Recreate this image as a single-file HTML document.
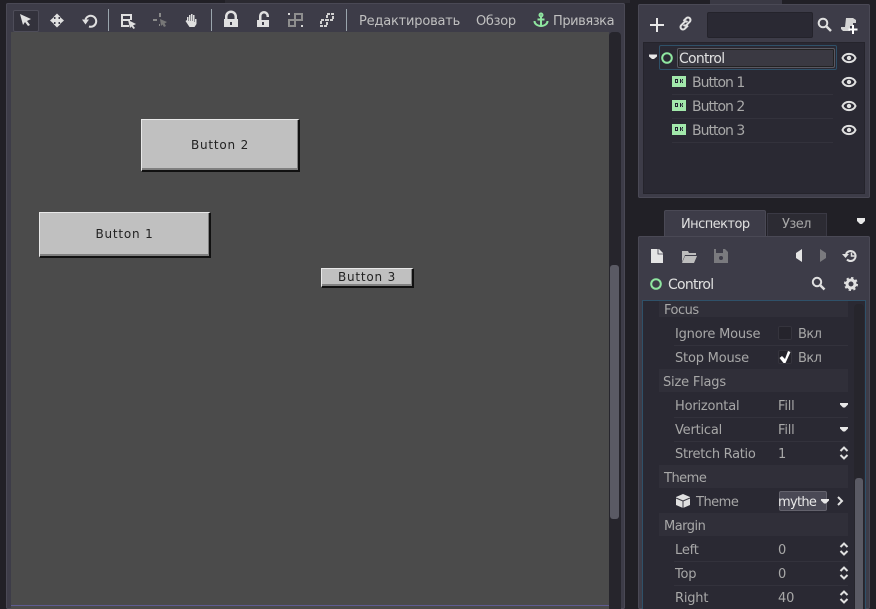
<!DOCTYPE html>
<html>
<head>
<meta charset="utf-8">
<style>
html,body{margin:0;padding:0;width:876px;height:609px;overflow:hidden;background:#212026;}
body{position:relative;font-family:"DejaVu Sans","Liberation Sans",sans-serif;font-size:13px;}
div,svg,span{position:absolute;}
.t{white-space:nowrap;line-height:18px;height:18px;color:#c0c0c0;}
.l{color:#a8a8a8;font-size:13px;letter-spacing:-.2px;}
.b{background:#c0c0c0;border-top:1px solid #e8e8e8;border-left:1px solid #e8e8e8;border-right:2px solid #111;border-bottom:2px solid #111;box-shadow:inset 0 -2px 0 #808080,inset -1px 0 0 #808080;box-sizing:border-box;color:#222;text-align:center;font-size:12px;letter-spacing:.8px;}
.sec{left:659px;width:189px;height:23px;background:#302f39;}
.line{height:1px;background:#33323c;}
.o{font-size:14px;letter-spacing:-.75px;color:#a8a8a8;}
.o2{font-size:14px;letter-spacing:-1px;color:#a8a8a8;}
</style>
</head>
<body>
<div style="left:225px;top:0;width:651px;height:3px;background:#2b2a31"></div>
<div style="left:630px;top:0;width:246px;height:4px;background:#212026"></div>
<div style="left:710px;top:0;width:72px;height:4px;background:#3a3944"></div>

<!-- main panel -->
<div style="left:6px;top:3px;width:619px;height:606px;background:#3d3c48;border-radius:2px;box-shadow:inset 0 0 0 1px #4a4955"></div>
<div style="left:11px;top:32px;width:598px;height:577px;background:#4b4b4b"></div>
<div style="left:11px;top:605px;width:598px;height:1px;background:#5e5c92"></div>
<div style="left:609px;top:32px;width:12px;height:577px;background:#26252c;border-radius:4px 4px 0 0"></div>
<div style="left:610px;top:265px;width:9px;height:254px;background:#5a5a64;border-radius:3px"></div>

<!-- toolbar -->
<div style="left:13px;top:10px;width:24px;height:20px;background:#33323c;border:1px solid #4e4d59;border-radius:2px;box-sizing:content-box"></div>
<svg style="left:0;top:0" width="360" height="32" viewBox="0 0 360 32">
<g fill="#e0e0e0">
<path d="M20 14 L31 19 L27 21 L30 25 L28 26 L25 22 L23 25Z"/>
<path d="M57 13.500 L60.500 17 H58.500 V19 H60 V17 L64 20.500 L60 24 V22 H58.500 V24 H60.500 L57 27.500 L53.500 24 H55.500 V22 H54 V24 L50 20.500 L54 17 V19 H55.500 V17 H53.500Z"/>
<path d="M82 19.500h7l-3.500 5Z"/>
</g>
<path d="M85.500 19.500 a5.500 5.500 0 1 1 3.500 7" fill="none" stroke="#e0e0e0" stroke-width="2"/>
<g fill="#e0e0e0">
<rect x="121" y="14" width="11" height="2"/><rect x="121" y="14" width="2" height="13"/><rect x="121" y="25" width="8" height="2"/><rect x="121" y="19" width="9" height="2"/><rect x="130" y="14" width="2" height="6"/>
<path d="M128 20 L136 24 L133 25.500 L135 28 L133.500 29 L131.500 26.500 L130 28Z"/>
<path d="M187 21 V17 h1.500 v4 h.5 V15 h1.500 v6 h.5 V14 h1.500 v7 h.5 V15 h1.500 v7 h.5 V19 h1.500 v5 l-2 3 h-5 l-4 -6 1.500 -1Z"/>
<path d="M225 19 v-2.500 a6 6 0 0 1 12 0 V19 h1 v8 h-14 v-8Z M227.500 19 h7 v-2.500 a3.500 3.500 0 0 0-7 0Z" fill-rule="evenodd"/>
<path d="M257 20 h12 v7 h-12Z M259 20 v-4 a5 5 0 0 1 10 0 v1 h-2.500 v-1 a2.500 2.500 0 0 0-5 0 v4Z"/>
</g>
<rect x="230" y="22" width="2" height="3" fill="#3d3c48"/><rect x="262" y="22" width="2" height="3" fill="#3d3c48"/>
<g fill="#8a8a8a">
<rect x="159" y="13" width="2" height="4"/><rect x="153" y="19" width="4" height="2"/><rect x="159" y="24" width="1" height="2"/>
<path d="M160 19 L167 22 L164.500 23.500 L166 26 L164 27 L162.500 24.500 L161 26Z" fill="#777"/>
</g>
<g fill="none" stroke="#8e8e8e" stroke-width="2"><rect x="295" y="14" width="7" height="6"/><rect x="289" y="20" width="6" height="6"/></g>
<g fill="#d8d8d8"><rect x="288" y="13" width="2" height="2"/><rect x="301" y="25" width="2" height="2"/></g>
<g fill="none" stroke="#d0d0d0" stroke-width="2" stroke-dasharray="3 1"><rect x="327" y="14" width="6" height="6"/><rect x="321" y="20" width="6" height="6"/></g>
<rect x="108" y="9" width="1" height="22" fill="#9aa5ad"/>
<rect x="211" y="9" width="1" height="22" fill="#9aa5ad"/>
<rect x="346" y="9" width="1" height="22" fill="#9aa5ad"/>
</svg>
<div class="t" style="left:359px;top:13px;font-size:13px;letter-spacing:-.2px">Редактировать</div>
<div class="t" style="left:476px;top:13px;font-size:13px;letter-spacing:-.3px">Обзор</div>
<svg style="left:533px;top:12px" width="16" height="16" viewBox="0 0 16 16"><g fill="none" stroke="#8fe6a0" stroke-width="2"><circle cx="8" cy="3" r="1.500"/><path d="M8 4.500V14M4.500 7.500h7M1.500 9c0 3 3 5 6.500 5s6.500-2 6.500-5"/></g></svg>
<div class="t" style="left:553px;top:13px;font-size:13px;letter-spacing:-.45px">Привязка</div>

<!-- canvas buttons -->
<div class="b t" style="left:141px;top:119px;width:159px;height:53px;line-height:50px;">Button 2</div>
<div class="b t" style="left:39px;top:212px;width:172px;height:46px;line-height:43px;">Button 1</div>
<div class="b t" style="left:321px;top:268px;width:93px;height:20px;line-height:16px;">Button 3</div>

<!-- scene panel -->
<div style="left:638px;top:4px;width:232px;height:194px;background:#3d3c48;border-radius:2px;box-shadow:inset 0 0 0 1px #4a4955"></div>
<div style="left:707px;top:12px;width:106px;height:26px;background:#2a2933;border:1px solid #24232b;border-radius:2px;box-sizing:border-box"></div>
<div style="left:643px;top:42px;width:222px;height:152px;background:#2a2933;box-shadow:inset 0 0 0 1px #25242c"></div>
<svg style="left:638px;top:4px" width="232" height="40" viewBox="0 0 232 40">
<g fill="#e8e8e8">
<rect x="12" y="20" width="14" height="2"/><rect x="18" y="14" width="2" height="14"/>
</g>
<g fill="none" stroke="#e0e0e0" stroke-width="2">
<path d="M50 21.500 l-3.500 3.500 a2.500 2.500 0 0 1-3.500-3.500 l3.500-3.500 a2.500 2.500 0 0 1 3 0"/>
<path d="M45.500 21 a2.500 2.500 0 0 0 3 0 l3.500-3.500 a2.500 2.500 0 0 0-3.500-3.500 l-3 3"/>
<circle cx="185" cy="19" r="4.300"/>
<path d="M188.500 22.500l4.500 4.500" stroke-width="2.500"/>
</g>
<path d="M208 14h7l3 2v3h-3v3h-3v5h-7l-2-2v-2h4Z" fill="#d4d4d4"/>
<rect x="214" y="21" width="2" height="9" fill="#fff"/><rect x="210.500" y="24.500" width="9" height="2" fill="#fff"/>
</svg>
<div style="left:659px;top:45px;width:178px;height:25px;border:1px solid #2f5169;border-radius:2px;box-sizing:border-box"></div>
<div style="left:677px;top:48px;width:158px;height:20px;background:#3a3942;border:1px solid #5a5962;box-shadow:inset 0 0 0 1px #222;border-radius:2px;box-sizing:border-box"></div>
<svg style="left:648px;top:52px" width="30" height="12" viewBox="0 0 30 12"><path d="M1 2.500h8v2l-3 2.500h-2l-3-2.500Z" fill="#e8e8e8"/><circle cx="19" cy="6" r="4.800" fill="none" stroke="#8fe6a0" stroke-width="2"/></svg>
<div class="t o" style="left:679px;top:50px;color:#e0e0e0;">Control</div>

<div class="line" style="left:672px;top:94px;width:161px"></div>
<div class="line" style="left:672px;top:118px;width:161px"></div>
<div class="line" style="left:672px;top:142px;width:161px"></div>
<svg style="left:672px;top:76px" width="14" height="60" viewBox="0 0 14 60">
<g><rect y="0" width="14" height="11" fill="#a2e8ab"/><path d="M3 3h3v4h-3Z M8 3h1v1.500h1V3h1v1.500h-1V5.500h1V7h-1V5.500h-1V7h-1Z" fill="#223"/><rect x="4" y="4" width="1" height="2" fill="#a2e8ab"/></g>
<g transform="translate(0,24)"><rect y="0" width="14" height="11" fill="#a2e8ab"/><path d="M3 3h3v4h-3Z M8 3h1v1.500h1V3h1v1.500h-1V5.500h1V7h-1V5.500h-1V7h-1Z" fill="#223"/><rect x="4" y="4" width="1" height="2" fill="#a2e8ab"/></g>
<g transform="translate(0,48)"><rect y="0" width="14" height="11" fill="#a2e8ab"/><path d="M3 3h3v4h-3Z M8 3h1v1.500h1V3h1v1.500h-1V5.500h1V7h-1V5.500h-1V7h-1Z" fill="#223"/><rect x="4" y="4" width="1" height="2" fill="#a2e8ab"/></g>
</svg>
<div class="t o2" style="left:692px;top:74px">Button 1</div>
<div class="t o2" style="left:692px;top:98px">Button 2</div>
<div class="t o2" style="left:692px;top:122px">Button 3</div>
<svg style="left:841px;top:50px" width="16" height="90" viewBox="0 0 16 90">
<g fill="none" stroke="#e0e0e0"><path d="M1.500 8 C3.500 2.500 12.500 2.500 14.500 8 C12.500 13.500 3.500 13.500 1.500 8Z" stroke-width="2"/><circle cx="8" cy="8" r="2.200" fill="#e0e0e0" stroke="none"/></g>
<g fill="none" stroke="#e0e0e0" transform="translate(0,24)"><path d="M1.500 8 C3.500 2.500 12.500 2.500 14.500 8 C12.500 13.500 3.500 13.500 1.500 8Z" stroke-width="2"/><circle cx="8" cy="8" r="2.200" fill="#e0e0e0" stroke="none"/></g>
<g fill="none" stroke="#e0e0e0" transform="translate(0,48)"><path d="M1.500 8 C3.500 2.500 12.500 2.500 14.500 8 C12.500 13.500 3.500 13.500 1.500 8Z" stroke-width="2"/><circle cx="8" cy="8" r="2.200" fill="#e0e0e0" stroke="none"/></g>
<g fill="none" stroke="#e0e0e0" transform="translate(0,72)"><path d="M1.500 8 C3.500 2.500 12.500 2.500 14.500 8 C12.500 13.500 3.500 13.500 1.500 8Z" stroke-width="2"/><circle cx="8" cy="8" r="2.200" fill="#e0e0e0" stroke="none"/></g>
</svg>

<!-- tabs -->
<div style="left:664px;top:210px;width:102px;height:27px;background:#3d3c48;border:1px solid #4a4955;border-bottom:none;box-sizing:border-box;border-radius:2px 2px 0 0"></div>
<div style="left:767px;top:213px;width:60px;height:24px;background:#2c2b33;border:1px solid #3a3944;border-bottom:none;box-sizing:border-box"></div>
<div class="t" style="left:681px;top:216px;color:#e0e0e0;font-size:13px;letter-spacing:-.55px">Инспектор</div>
<div class="t" style="left:782px;top:216px;color:#a8a8a8;font-size:13px;letter-spacing:-.55px">Узел</div>
<svg style="left:856px;top:218px" width="10" height="8" viewBox="0 0 10 8"><path d="M1 0h8v3l-3 3h-2l-3-3Z" fill="#e8e8e8"/></svg>

<!-- inspector -->
<div style="left:638px;top:236px;width:232px;height:373px;background:#3d3c48;border-radius:2px;box-shadow:inset 0 0 0 1px #4a4955"></div>
<div style="left:642px;top:300px;width:224px;height:309px;background:#2a2933;border:1px solid #2f5169;border-bottom:none;box-sizing:border-box"></div>
<svg style="left:638px;top:240px" width="232" height="56" viewBox="0 0 232 56">
<path d="M13 9h8l4 4v10h-12Z" fill="#e4e4e4"/><path d="M20 9v5h5" fill="none" stroke="#3d3c48" stroke-width=".8"/>
<path d="M44 11h6l1 2h7v2h-11l-3 7Z M47 16h12l-3 7h-12Z" fill="#bdbdbd"/>
<path d="M76 9h11l3 3v11h-14Z" fill="#7a7a7e"/><rect x="78" y="9" width="7" height="4" fill="#3d3c48"/><circle cx="83" cy="18" r="2" fill="#3d3c48"/>
<path d="M164 9v13l-6-4v-5Z" fill="#e4e4e4"/>
<path d="M182 9v13l6-4v-5Z" fill="#7a7a7e"/>
<g fill="none" stroke="#e0e0e0" stroke-width="2"><path d="M208 14 a5 5 0 1 1 1 5.500"/><path d="M213.500 12.500v3.500h3" stroke-width="1.500"/></g><path d="M204 14h7l-3.500 4Z" fill="#e0e0e0"/>
<g fill="none" stroke="#e0e0e0"><circle cx="18" cy="44" r="4.800" stroke="#8fe6a0" stroke-width="2"/><circle cx="179" cy="42" r="4.200" stroke-width="2"/><path d="M182 45l4.500 4.500" stroke-width="2.500"/><circle cx="213" cy="44" r="4" stroke-width="3" /><circle cx="213" cy="44" r="6" stroke-width="2" stroke-dasharray="2.300 2.400"/></g>
</svg>
<div class="t o" style="left:668px;top:276px;color:#e0e0e0;">Control</div>

<!-- list -->
<div class="sec" style="top:301px;height:16px"></div>
<div class="sec" style="top:369px"></div>
<div class="sec" style="top:465px"></div>
<div class="sec" style="top:513px"></div>
<div style="left:854px;top:304px;width:10px;height:305px;background:#26252c;border-radius:4px 4px 0 0"></div>
<div style="left:855px;top:478px;width:8px;height:131px;background:#5a5a64;border-radius:3px 3px 0 0"></div>

<div class="line" style="left:674px;top:345px;width:174px"></div>
<div class="line" style="left:674px;top:417px;width:174px"></div>
<div class="line" style="left:674px;top:441px;width:174px"></div>
<div class="line" style="left:674px;top:561px;width:174px"></div>
<div class="line" style="left:674px;top:585px;width:174px"></div>

<div class="t l" style="left:664px;top:302px;letter-spacing:-.5px">Focus</div>
<div class="t l" style="left:675px;top:326px">Ignore Mouse</div>
<div class="t l" style="left:675px;top:350px">Stop Mouse</div>
<div class="t l" style="left:663px;top:374px">Size Flags</div>
<div class="t l" style="left:675px;top:398px">Horizontal</div>
<div class="t l" style="left:675px;top:422px">Vertical</div>
<div class="t l" style="left:675px;top:446px;letter-spacing:-.3px">Stretch Ratio</div>
<div class="t l" style="left:664px;top:470px;letter-spacing:-.5px">Theme</div>
<div class="t l" style="left:696px;top:494px;letter-spacing:-.5px">Theme</div>
<div class="t l" style="left:664px;top:518px;letter-spacing:-.5px">Margin</div>
<div class="t l" style="left:675px;top:542px">Left</div>
<div class="t l" style="left:675px;top:566px">Top</div>
<div class="t l" style="left:675px;top:590px">Right</div>

<div style="left:778px;top:326px;width:14px;height:14px;background:#25242c;border-radius:2px;box-shadow:inset 0 0 0 1px #35343d"></div>
<div style="left:778px;top:350px;width:14px;height:14px;background:#25242c;border-radius:2px;box-shadow:inset 0 0 0 1px #35343d"></div>
<div class="t l" style="left:798px;top:326px;letter-spacing:-.6px">Вкл</div>
<div class="t l" style="left:798px;top:350px;letter-spacing:-.6px">Вкл</div>
<div class="t l" style="left:778px;top:398px">Fill</div>
<div class="t l" style="left:778px;top:422px">Fill</div>
<div class="t l" style="left:778px;top:446px">1</div>
<div class="t l" style="left:778px;top:542px">0</div>
<div class="t l" style="left:778px;top:566px">0</div>
<div class="t l" style="left:778px;top:590px">40</div>
<div style="left:779px;top:491px;width:48px;height:20px;background:#4a4955;border:1px solid #63626c;border-radius:2px;box-sizing:border-box"></div>
<div class="t" style="left:778px;top:494px;color:#e8e8e8;font-size:13px;letter-spacing:-.7px">mythe</div>

<svg style="left:670px;top:300px" width="186" height="309" viewBox="670 300 186 309">
<path d="M782 356l3 3 3-8 2.500 1-5 11h-2l-4-5Z" fill="#fff"/>
<g fill="#e8e8e8"><path d="M840 403h8v1.500l-3 3h-2l-3-3Z"/><path d="M840 427h8v1.500l-3 3h-2l-3-3Z"/><path d="M821 499h8v1.500l-3 3h-2l-3-3Z"/></g>
<g fill="none" stroke="#e0e0e0" stroke-width="2">
<path d="M840.500 451l3.500-3.500 3.500 3.500M840.500 455l3.500 3.500 3.500-3.500"/>
<path d="M840.500 547l3.500-3.500 3.500 3.500M840.500 551l3.500 3.500 3.500-3.500"/>
<path d="M840.500 571l3.500-3.500 3.500 3.500M840.500 575l3.500 3.500 3.500-3.500"/>
<path d="M840.500 595l3.500-3.500 3.500 3.500M840.500 599l3.500 3.500 3.500-3.500"/>
<path d="M838 497l4 4-4 4"/>
</g>
<path d="M683 494l7 3v8l-7 3-7-3v-8Z" fill="#e0e0e0"/><path d="M683 501l-7-3M683 501l7-3M683 501v7" stroke="#3a3942" stroke-width="1" fill="none"/>
</svg>
</body>
</html>
